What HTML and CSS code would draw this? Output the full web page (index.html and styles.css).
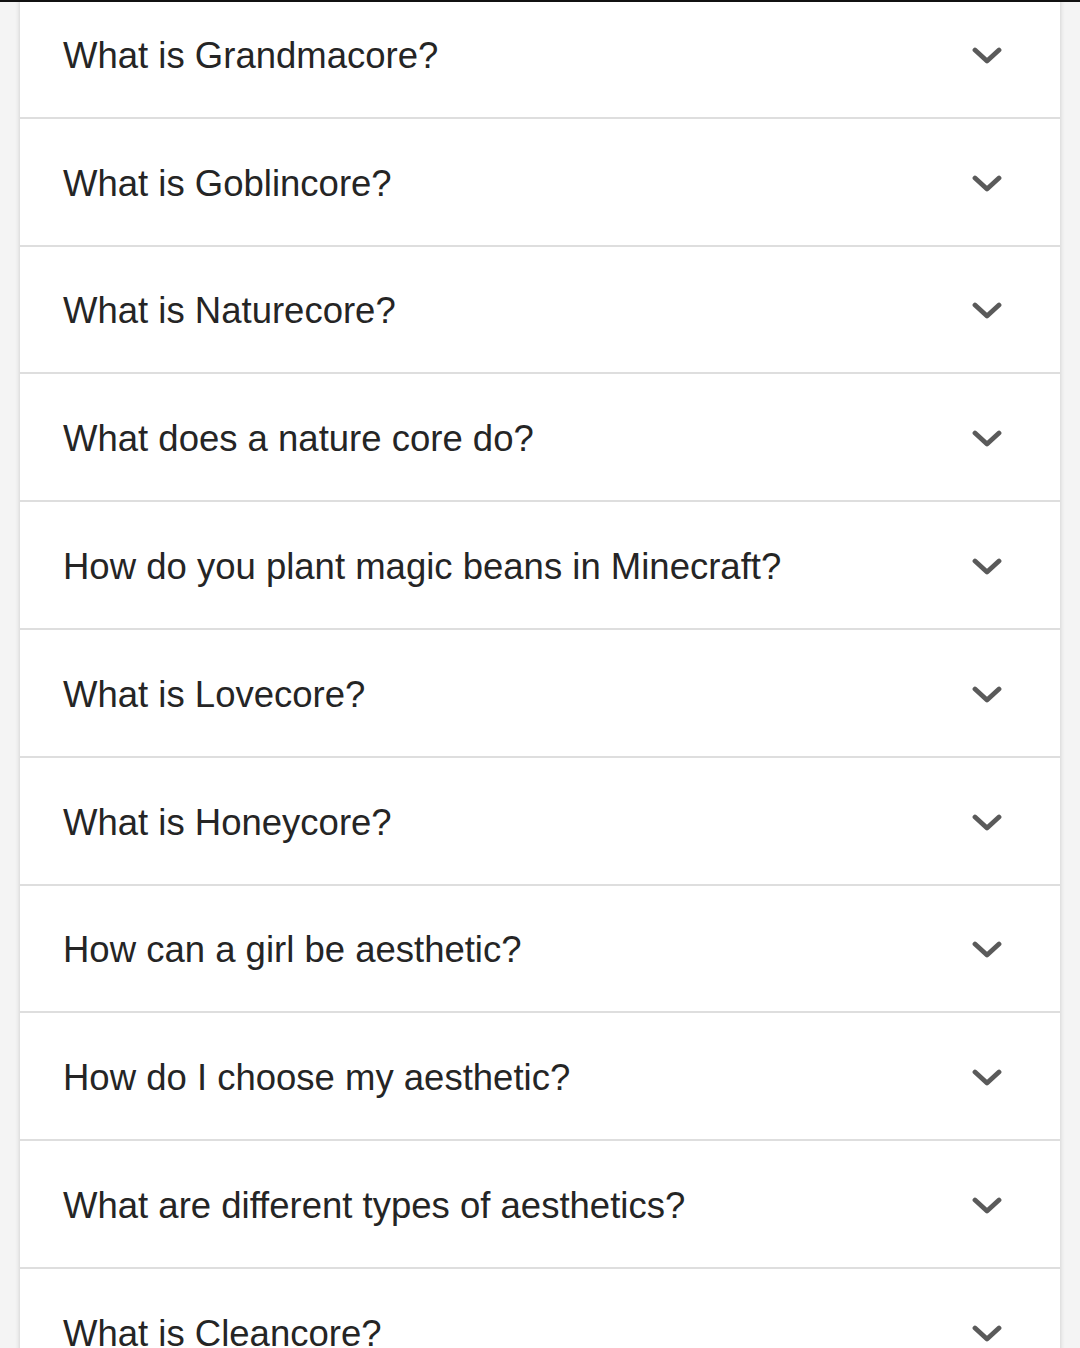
FILE: index.html
```html
<!DOCTYPE html>
<html>
<head>
<meta charset="utf-8">
<link rel="stylesheet" href="styles.css">
</head>
<body>
<div class="viewport">
  <div class="card">
    <div class="row"><span class="q">What is Grandmacore?</span><svg class="chev" viewBox="0 0 30 18"><path d="M3 3 L15 14 L27 3"/></svg></div>
    <div class="row"><span class="q">What is Goblincore?</span><svg class="chev" viewBox="0 0 30 18"><path d="M3 3 L15 14 L27 3"/></svg></div>
    <div class="row"><span class="q">What is Naturecore?</span><svg class="chev" viewBox="0 0 30 18"><path d="M3 3 L15 14 L27 3"/></svg></div>
    <div class="row"><span class="q">What does a nature core do?</span><svg class="chev" viewBox="0 0 30 18"><path d="M3 3 L15 14 L27 3"/></svg></div>
    <div class="row"><span class="q">How do you plant magic beans in Minecraft?</span><svg class="chev" viewBox="0 0 30 18"><path d="M3 3 L15 14 L27 3"/></svg></div>
    <div class="row"><span class="q">What is Lovecore?</span><svg class="chev" viewBox="0 0 30 18"><path d="M3 3 L15 14 L27 3"/></svg></div>
    <div class="row"><span class="q">What is Honeycore?</span><svg class="chev" viewBox="0 0 30 18"><path d="M3 3 L15 14 L27 3"/></svg></div>
    <div class="row"><span class="q">How can a girl be aesthetic?</span><svg class="chev" viewBox="0 0 30 18"><path d="M3 3 L15 14 L27 3"/></svg></div>
    <div class="row"><span class="q">How do I choose my aesthetic?</span><svg class="chev" viewBox="0 0 30 18"><path d="M3 3 L15 14 L27 3"/></svg></div>
    <div class="row"><span class="q">What are different types of aesthetics?</span><svg class="chev" viewBox="0 0 30 18"><path d="M3 3 L15 14 L27 3"/></svg></div>
    <div class="row"><span class="q">What is Cleancore?</span><svg class="chev" viewBox="0 0 30 18"><path d="M3 3 L15 14 L27 3"/></svg></div>
  </div>
</div>
</body>
</html>
```
FILE: styles.css
```css
html, body {
  margin: 0;
  padding: 0;
}
body {
  background: #f4f4f4;
  font-family: "Liberation Sans", Arial, sans-serif;
  width: 1080px;
  height: 1348px;
  overflow: hidden;
}
.viewport {
  border-top: 2px solid #111;
  height: 1346px;
  overflow: hidden;
  padding: 0 20px;
}
.card {
  margin-top: -11px;
  background: #fff;
  box-shadow: 0 0 5px rgba(0, 0, 0, 0.18);
}
.row {
  box-sizing: border-box;
  height: 127.8px;
  border-bottom: 2px solid #dedede;
  display: flex;
  align-items: center;
  justify-content: space-between;
  padding: 4px 58px 0 43px;
}
.q {
  font-size: 36.5px;
  color: #252525;
}
.chev {
  width: 30px;
  height: 18px;
  fill: none;
  stroke: #5a5a5a;
  stroke-width: 4.8;
  stroke-linecap: round;
  stroke-linejoin: round;
}
```
